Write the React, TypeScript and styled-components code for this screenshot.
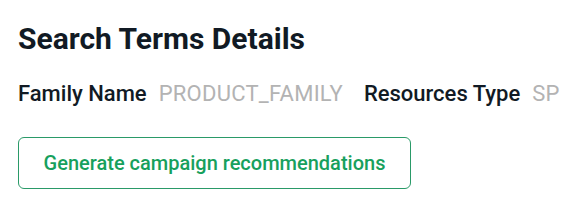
import React from 'react';
import styled, { createGlobalStyle } from 'styled-components';

const GlobalStyle = createGlobalStyle`
  body {
    margin: 0;
    background: #ffffff;
    font-family: Roboto, 'Liberation Sans', sans-serif;
  }
`;

const DetailsView = styled.div`
  display: flex;
  flex-direction: column;
  align-items: flex-start;
  padding: 21px 18px 0 18px;
`;

const Title = styled.h2`
  margin: 0;
  font-size: 30px;
  font-weight: 700;
  line-height: 36px;
  color: #111a24;
`;

const InfoRow = styled.div`
  display: flex;
  align-items: baseline;
  gap: 21px;
  margin-top: 23px;
`;

const InfoItem = styled.div`
  display: flex;
  align-items: baseline;
  gap: 12px;
  font-size: 22px;
  line-height: 28px;
`;

const InfoLabel = styled.span`
  font-weight: 500;
  color: #111a24;
`;

const InfoValue = styled.span`
  font-weight: 400;
  letter-spacing: 0.25px;
  color: #b3b3b3;
`;

const OutlineButton = styled.button`
  margin-top: 29px;
  width: 393px;
  height: 52px;
  border: 1px solid #2a9a68;
  border-radius: 6px;
  background: #ffffff;
  color: #17a05d;
  font-family: Roboto, 'Liberation Sans', sans-serif;
  font-size: 20px;
  font-weight: 500;
  cursor: pointer;
`;

const App = () => {
  return (
    <>
      <GlobalStyle />
      <DetailsView>
        <Title>Search Terms Details</Title>
        <InfoRow>
          <InfoItem>
            <InfoLabel>Family Name</InfoLabel>
            <InfoValue>PRODUCT_FAMILY</InfoValue>
          </InfoItem>
          <InfoItem>
            <InfoLabel>Resources Type</InfoLabel>
            <InfoValue>SP</InfoValue>
          </InfoItem>
        </InfoRow>
        <OutlineButton>Generate campaign recommendations</OutlineButton>
      </DetailsView>
    </>
  );
};

export default App;
